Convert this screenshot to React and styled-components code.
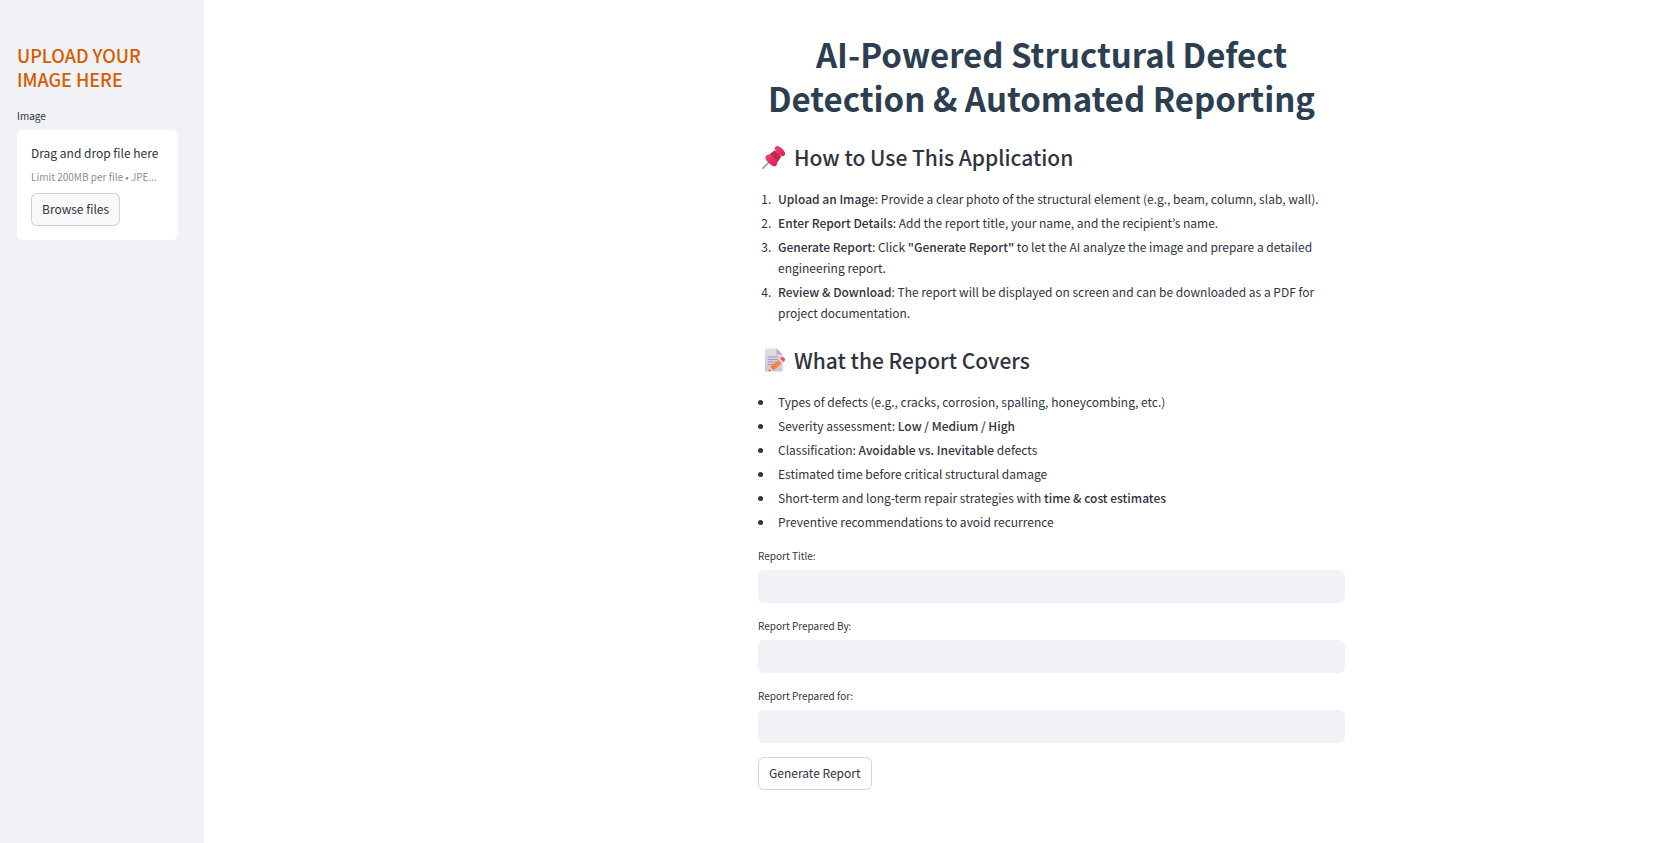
import React from 'react';
import styled, { createGlobalStyle } from 'styled-components';

const GlobalStyle = createGlobalStyle`
  *, *::before, *::after { box-sizing: border-box; }
  body {
    margin: 0;
    background: #ffffff;
    color: #31333f;
    font-family: "Noto Sans CJK KR", "Noto Sans", sans-serif;
    font-size: 12px;
    line-height: 21px;
  }
  button, input { font: inherit; color: inherit; }
`;

const Page = styled.div`
  display: flex;
  min-height: 100vh;
`;

const Sidebar = styled.aside`
  flex: none;
  width: 204px;
  padding: 43px 26px 24px 17px;
  background: #f0f2f6;
`;

const SidebarTitle = styled.h2`
  margin: 0 0 16px;
  color: #d95b00;
  font-size: 18px;
  font-weight: 500;
  line-height: 24px;
`;

const Label = styled.label`
  display: block;
  margin-bottom: 6px;
  font-size: 10px;
  line-height: 17px;
`;

const DropZone = styled.section`
  display: flex;
  flex-direction: column;
  align-items: flex-start;
  gap: 5px;
  padding: 12px 13px 14px 14px;
  border-radius: 6px;
  background: #ffffff;
`;

const DropHint = styled.small`
  height: 17px;
  margin-bottom: 3px;
  color: #31333f99;
  font-size: 10px;
  line-height: 17px;
  white-space: nowrap;
`;

const Ellipsis = styled.span`
  font-family: "Noto Sans", sans-serif;
`;

const Button = styled.button`
  height: 33px;
  padding: 0 10px 2px;
  border: 1px solid #31333f33;
  border-radius: 6px;
  background: ${({ $tinted }) => ($tinted ? '#f9f9fb' : '#ffffff')};
  line-height: 21px;
  cursor: pointer;
`;

const Main = styled.main`
  flex: 1;
  min-width: 0;
  display: grid;
  grid-template-columns: 477fr 587fr 242fr;
  column-gap: 13px;
  align-content: start;
  padding: 32px 64px;
`;

const Content = styled.div`
  grid-column: 2;
  min-width: 0;
`;

const Title = styled.h1`
  margin: 0;
  color: #2c3e50;
  font-size: 33px;
  font-weight: 700;
  line-height: 44px;
  text-align: center;
`;

const AnchorSlot = styled.span`
  display: inline-block;
  width: 20px;
`;

const SectionTitle = styled.h3`
  display: flex;
  align-items: center;
  gap: 8px;
  margin: 24px 0 18px;
  padding-left: 4px;
  font-size: 21px;
  font-weight: 500;
  line-height: 26px;
`;

const Steps = styled.ol`
  margin: 0;
  padding: 0;
`;

const Topics = styled.ul`
  margin: 0;
  padding: 0;
`;

const Item = styled.li`
  margin: 0 0 3px 16px;
  padding-left: 4px;
  &:last-child { margin-bottom: 0; }
`;

const Strong = styled.strong`
  font-weight: 500;
`;

const Form = styled.form`
  display: flex;
  flex-direction: column;
  align-items: flex-start;
  gap: 14px;
  margin-top: 15px;
`;

const Field = styled.div`
  width: 100%;
`;

const TextInput = styled.input`
  display: block;
  width: 100%;
  height: 33px;
  padding: 0 10px;
  border: 0;
  border-radius: 6px;
  background: #f0f2f6;
`;

const PinIcon = () => (
  <svg width="24" height="24" viewBox="0 0 24 24" aria-hidden="true">
    <defs>
      <linearGradient id="pinHead" x1="0" y1="0" x2="1" y2="1">
        <stop offset="0" stopColor="#f0437a" />
        <stop offset="1" stopColor="#e01b52" />
      </linearGradient>
    </defs>
    <path d="M.8 23.3 9 15.2" stroke="#9b90a6" strokeWidth="1.6" strokeLinecap="round" />
    <path d="M12.6 5.2 19.3 11.4 15.4 17.4 7.3 9.6Z" fill="#bd2a50" />
    <path d="M3.9 11.2C5.6 8.7 8.5 9.2 11.6 12.2 14.9 15.3 16.4 18.6 14.3 20.5 12.6 22 9.5 20.7 6.5 17.7 3.7 15 2.7 12.9 3.9 11.2Z" fill="url(#pinHead)" />
    <path d="M13.3 1.9C14.6.1 17.4 1 20.2 3.8 23 6.5 23.9 9.1 22.4 10.6 20.9 12 18.4 11 15.8 8.5 13.1 5.9 12.2 3.5 13.3 1.9Z" fill="url(#pinHead)" />
  </svg>
);

const MemoIcon = () => (
  <svg width="24" height="24" viewBox="0 0 24 24" aria-hidden="true">
    <defs>
      <linearGradient id="memoPaper" x1="0" y1="0" x2="0" y2="1">
        <stop offset="0" stopColor="#e3dcea" />
        <stop offset="1" stopColor="#cfc5d8" />
      </linearGradient>
      <linearGradient id="memoPencil" x1="1" y1="0" x2="0" y2="1">
        <stop offset="0" stopColor="#ff8f4a" />
        <stop offset="1" stopColor="#f5742a" />
      </linearGradient>
    </defs>
    <path d="M3 .5h11.5l6 6v17H3Z" fill="url(#memoPaper)" />
    <path d="M14.5.5l6 6h-6Z" fill="#b9adc4" />
    <path d="M6 9h10M6 11.5h10M6 14h8M6 16.5h5" stroke="#a79bb3" strokeWidth="1" />
    <path d="M6.8 23.3 8.2 18.7 11.8 22.3Z" fill="#f3c6a6" />
    <path d="M6.8 23.3 7.3 21.5 8.6 22.8Z" fill="#55455f" />
    <path d="M8.2 18.7 16.6 11.8 19.8 15.2 11.8 22.3Z" fill="url(#memoPencil)" />
    <path d="M16.6 11.8 18 10.6 21.2 14 19.8 15.2Z" fill="#e6dfee" />
    <path d="M18 10.6 19.3 9.5C20.3 8.8 21.5 9 22.3 9.9 23.2 10.9 23.3 12.1 22.4 13L21.2 14Z" fill="#f7525f" />
  </svg>
);

const fields = [
  { id: 'report-title', label: 'Report Title:' },
  { id: 'prepared-by', label: 'Report Prepared By:' },
  { id: 'prepared-for', label: 'Report Prepared for:' },
];

export default function App() {
  return (
    <>
      <GlobalStyle />
      <Page>
        <Sidebar>
          <SidebarTitle>UPLOAD YOUR IMAGE HERE</SidebarTitle>
          <Label htmlFor="browse">Image</Label>
          <DropZone>
            <span>Drag and drop file here</span>
            <DropHint>Limit 200MB per file • JPE<Ellipsis>…</Ellipsis></DropHint>
            <Button id="browse" type="button" $tinted>Browse files</Button>
          </DropZone>
        </Sidebar>
        <Main>
          <Content>
            <Title>
              AI-Powered Structural Defect Detection &amp; Automated Reporting
              <AnchorSlot />
            </Title>

            <SectionTitle><PinIcon />How to Use This Application</SectionTitle>
            <Steps>
              <Item><Strong>Upload an Image</Strong>: Provide a clear photo of the structural element (e.g., beam, column, slab, wall).</Item>
              <Item><Strong>Enter Report Details</Strong>: Add the report title, your name, and the recipient’s name.</Item>
              <Item><Strong>Generate Report</Strong>: Click <Strong>"Generate Report"</Strong> to let the AI analyze the image and prepare a detailed engineering report.</Item>
              <Item><Strong>Review &amp; Download</Strong>: The report will be displayed on screen and can be downloaded as a PDF for project documentation.</Item>
            </Steps>

            <SectionTitle><MemoIcon />What the Report Covers</SectionTitle>
            <Topics>
              <Item>Types of defects (e.g., cracks, corrosion, spalling, honeycombing, etc.)</Item>
              <Item>Severity assessment: <Strong>Low / Medium / High</Strong></Item>
              <Item>Classification: <Strong>Avoidable vs. Inevitable</Strong> defects</Item>
              <Item>Estimated time before critical structural damage</Item>
              <Item>Short-term and long-term repair strategies with <Strong>time &amp; cost estimates</Strong></Item>
              <Item>Preventive recommendations to avoid recurrence</Item>
            </Topics>

            <Form onSubmit={(event) => event.preventDefault()}>
              {fields.map(({ id, label }) => (
                <Field key={id}>
                  <Label htmlFor={id}>{label}</Label>
                  <TextInput id={id} type="text" />
                </Field>
              ))}
              <Button type="submit">Generate Report</Button>
            </Form>
          </Content>
        </Main>
      </Page>
    </>
  );
}
